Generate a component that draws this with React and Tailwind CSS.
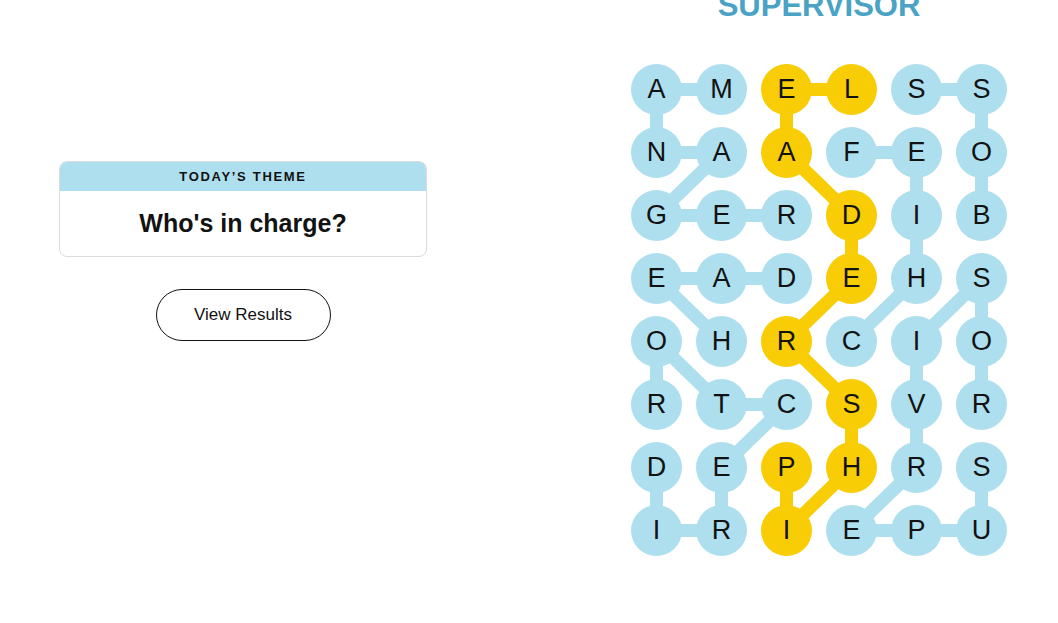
import React from "react";

const BLUE = "#aedfee";
const YELLOW = "#f8cd05";

const rows = [
  "AMELSS",
  "NAAFEO",
  "GERDIB",
  "EADEHS",
  "OHRCIO",
  "RTCSVR",
  "DEPHRS",
  "IRIEPU",
];

// cells of the spangram (row, col)
const spangram = [
  [0, 3], [0, 2], [1, 2], [2, 3], [3, 3], [4, 2], [5, 3], [6, 3], [7, 2], [6, 2],
];

// found words as paths of [row, col]
const words = [
  [[0, 1], [0, 0], [1, 0], [1, 1], [2, 0], [2, 1], [2, 2]], // MANAGER
  [[4, 1], [3, 0], [3, 1], [3, 2]], // HEAD
  [[6, 0], [7, 0], [7, 1], [6, 1], [5, 2], [5, 1], [4, 0], [5, 0]], // DIRECTOR
  [[2, 5], [1, 5], [0, 5], [0, 4]], // BOSS
  [[4, 3], [3, 4], [2, 4], [1, 4], [1, 3]], // CHIEF
  [[6, 5], [7, 5], [7, 4], [7, 3], [6, 4], [5, 4], [4, 4], [3, 5], [4, 5], [5, 5]], // SUPERVISOR
];

const cx = (c) => 25.5 + c * 65;
const cy = (r) => 25.5 + r * 63;

const isSpangram = (r, c) => spangram.some(([a, b]) => a === r && b === c);

function Path({ cells, color }) {
  const pts = cells.map(([r, c]) => `${cx(c)},${cy(r)}`).join(" ");
  return <polyline points={pts} fill="none" stroke={color} strokeWidth="13" strokeLinejoin="round" />;
}

function Board() {
  return (
    <div className="relative">
      {/* connection lines sit behind the letters */}
      <svg className="absolute inset-0" width="376" height="492" viewBox="0 0 376 492">
        {words.map((w, i) => (
          <Path key={i} cells={w} color={BLUE} />
        ))}
        <Path cells={spangram} color={YELLOW} />
      </svg>
      <div className="relative grid grid-cols-6 gap-x-[14px] gap-y-[12px]">
        {rows.map((row, r) =>
          row.split("").map((ch, c) => (
            <div
              key={`${r}-${c}`}
              className={`flex h-[51px] w-[51px] items-center justify-center rounded-full text-[27px] leading-none text-[#121212] ${
                isSpangram(r, c) ? "bg-[#f8cd05]" : "bg-[#aedfee]"
              }`}
            >
              {ch}
            </div>
          ))
        )}
      </div>
    </div>
  );
}

export default function App() {
  return (
    <div
      className="flex h-[623px] w-full overflow-hidden bg-white text-[#121212]"
      style={{ fontFamily: '"Liberation Sans", Arial, sans-serif' }}
    >
      {/* Left: theme card and results button */}
      <div className="flex w-[486px] shrink-0 flex-col items-center pt-[161px]">
        <div className="w-[368px] overflow-hidden rounded-lg border border-[#dcdcdc]">
          <div className="flex h-[29px] items-center justify-center bg-[#aedfee] text-[13px] font-bold uppercase tracking-[0.13em]">
            Today’s Theme
          </div>
          <div className="flex h-[65px] items-center justify-center text-[25px] font-bold">
            Who's in charge?
          </div>
        </div>
        <button className="mt-[32px] h-[52px] w-[175px] rounded-full border border-[#121212] text-[17px]">
          View Results
        </button>
      </div>

      {/* Right: found word and board */}
      <div className="ml-[145px] flex w-[376px] flex-col items-center">
        <div className="mt-[-10px] h-[31px] text-[31px] font-bold uppercase leading-[31px] text-[#4aa3c4]">
          Supervisor
        </div>
        <div className="mt-[43px]">
          <Board />
        </div>
      </div>
    </div>
  );
}
